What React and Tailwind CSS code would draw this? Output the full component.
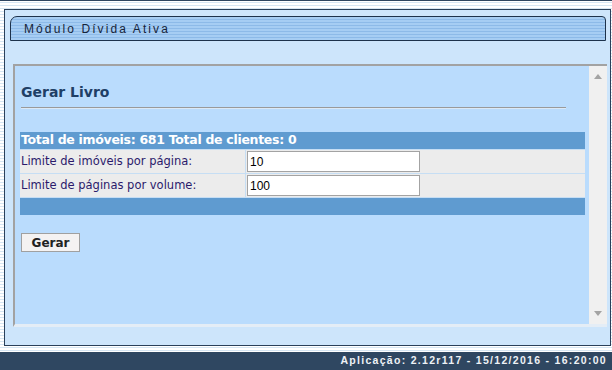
export default function App() {
  return (
    <div className="w-[612px] h-[370px] flex flex-col overflow-hidden bg-[repeating-linear-gradient(180deg,#ffffff_0px,#ffffff_2px,#d6e6f3_2px,#d6e6f3_3px)] font-['DejaVu_Sans',sans-serif]">
      <div className="h-[1px] bg-[#2e4560]" />

      {/* painel principal */}
      <div className="mt-[8px] ml-[4px] mr-[1px] h-[337px] shrink-0 border border-[#2a405a] bg-[#cde5fb] flex flex-col pl-[5px] pr-[3px]">
        <div className="mt-[6px] mr-[1px] h-[25px] border border-[#1d324b] rounded-tl-[7px] rounded-tr-[4px] bg-[repeating-linear-gradient(180deg,#a6cdf3_0px,#a6cdf3_2px,#8dbae8_2px,#8dbae8_3px)] flex items-center pl-[13px]">
          <span className="font-['Liberation_Sans',sans-serif] text-[12px] tracking-[2.1px] text-[#16243a]">
            Módulo Dívida Ativa
          </span>
        </div>

        <div className="mt-[23px] ml-[3px] h-[263px] flex border-t-2 border-l-2 border-t-[#a2a2a2] border-l-[#a2a2a2] border-b-[3px] border-b-[#e4edf6] bg-[#badcfd]">
          <div className="flex-1 flex flex-col pl-[5px] pr-[4px]">
            <h1 className="ml-[1px] mt-[17px] text-[14px] font-bold text-[#1f3f66] leading-[18px]">
              Gerar Livro
            </h1>
            <div className="ml-[1px] mt-[6px] w-[545px] h-[2px] border-t border-t-[#9a9a9a] border-b border-b-[#dbe9f7]" />

            <div className="mt-[23px] flex flex-col gap-[1px] bg-[#c6def4]">
              <div className="h-[17px] bg-[#5f9bd0] flex items-center pl-[1px]">
                <span className="text-[12.5px] font-bold text-white tracking-[-0.3px]">
                  Total de imóveis: 681 Total de clientes: 0
                </span>
              </div>
              <div className="flex gap-[1px] h-[23px]">
                <div className="w-[225px] bg-[#ececec] flex items-center pl-[1px] text-[11.5px] text-[#2b1a6b]">
                  Limite de imóveis por página:
                </div>
                <div className="flex-1 bg-[#ececec] flex items-center pl-[1px]">
                  <input
                    defaultValue="10"
                    className="w-[173px] h-[21px] border border-[#a3a3a3] bg-white px-[2px] text-[12px] font-['Liberation_Sans',sans-serif] text-black outline-none"
                  />
                </div>
              </div>
              <div className="flex gap-[1px] h-[23px]">
                <div className="w-[225px] bg-[#ececec] flex items-center pl-[1px] text-[11.5px] text-[#2b1a6b]">
                  Limite de páginas por volume:
                </div>
                <div className="flex-1 bg-[#ececec] flex items-center pl-[1px]">
                  <input
                    defaultValue="100"
                    className="w-[173px] h-[21px] border border-[#a3a3a3] bg-white px-[2px] text-[12px] font-['Liberation_Sans',sans-serif] text-black outline-none"
                  />
                </div>
              </div>
              <div className="h-[17px] bg-[#5f9bd0]" />
            </div>

            <div className="mt-[18px] flex">
              <button className="ml-[1px] w-[59px] h-[19px] border border-[#a0a0a0] bg-[#f4f2f2] text-[12px] font-bold text-[#222] leading-none">
                Gerar
              </button>
            </div>
          </div>

          {/* barra de rolagem */}
          <div className="w-[18px] bg-[#f0f0f0] flex flex-col items-center justify-between py-[8px]">
            <svg width="8" height="5" viewBox="0 0 8 5">
              <path d="M0 5 L4 0 L8 5 Z" fill="#a3a3a3" />
            </svg>
            <svg width="8" height="5" viewBox="0 0 8 5">
              <path d="M0 0 L8 0 L4 5 Z" fill="#a3a3a3" />
            </svg>
          </div>
        </div>
      </div>

      <div className="mt-[6px] h-[18px] shrink-0 bg-[#2f4761] flex items-center justify-end pr-[5px]">
        <span className="font-['Liberation_Sans',sans-serif] text-[10.5px] font-bold tracking-[1.3px] text-[#eef2f6]">
          Aplicação: 2.12r117 - 15/12/2016 - 16:20:00
        </span>
      </div>
    </div>
  );
}
